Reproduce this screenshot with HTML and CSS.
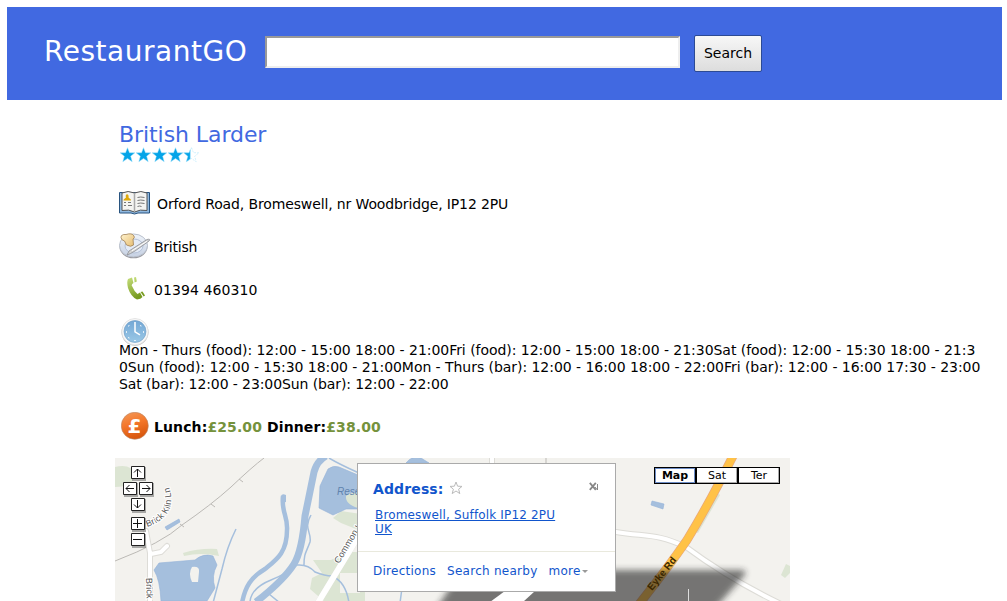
FILE: index.html
```html
<!DOCTYPE html>
<html lang="en">
<head>
<meta charset="utf-8">
<title>RestaurantGO</title>
<link rel="stylesheet" href="styles.css">
</head>
<body>
<header class="header">
  <h1 class="brand">RestaurantGO</h1>
  <input class="query" type="text" aria-label="Search">
  <button class="search">Search</button>
</header>
<main class="details">
  <h2 class="name">British Larder</h2>
  <svg class="stars" width="84" height="16" viewBox="-.5 0 84 16">
    <defs>
      <path id="star" d="M8 .7 10 5.700 15.400 5.800 11.200 9.200 12.700 14.700 8 11.500 3.300 14.700 4.800 9.200 .6 5.800 6 5.700Z"/>
      <path id="halfstar" d="M7.300 2.500 6 5.700 .6 5.800 4.800 9.200 3.300 14.700 7.300 12Z"/>
    </defs>
    <g fill="#04a4e8" stroke="#a5e3fa" stroke-width=".5">
      <use href="#star"/><use href="#star" x="16"/><use href="#star" x="32"/><use href="#star" x="48"/>
      <use href="#star" x="64" fill="#fff" stroke-dasharray="2 1"/>
      <use href="#halfstar" x="63.500"/>
    </g>
  </svg>
  <div class="row address">
    <svg width="31" height="24" viewBox="0 0 31 24">
      <path d="M.5 1.500h30v20.500H19q-3.500 2-7 0H.5z" fill="#8fb8df" stroke="#28537f"/>
      <path d="M3 2Q9-1 15.500 2 22-1 28 2v17.500q-7-1.500-12.500 1.500Q10 18 3 19.500z" fill="#f4f4f1" stroke="#555" stroke-width="1"/>
      <path d="M15.500 2v18" stroke="#aaa" stroke-width="1.500"/>
      <path d="M4.500 9.500c0-2 2-2 2.500-3-1.500-4.500 3.500-4.500 2.500 0 .5 1 2.500 1 2.500 3z" fill="#dfa90b"/>
      <path d="M5 11.500h2m2 0h3M5 14.500h2m2 0h4M18.500 6.500q3-1 7 0m-7 3q3-1 7 0m-7 3q3-1 7 0m-7 3q2-1 4 0" stroke="#777" fill="none"/>
    </svg>
    <span>Orford Road, Bromeswell, nr Woodbridge, IP12 2PU</span>
  </div>
  <div class="row cuisine">
    <svg width="32" height="26" viewBox="0 0 32 26">
      <defs>
        <linearGradient id="plate" x2="0" y2="1"><stop stop-color="#f0f4fa"/><stop offset="1" stop-color="#c6d1e3"/></linearGradient>
        <linearGradient id="bread" x2="1" y2="1"><stop stop-color="#fff3cf"/><stop offset="1" stop-color="#e6bd72"/></linearGradient>
      </defs>
      <ellipse cx="14.500" cy="13.800" rx="14" ry="11.500" fill="#98989e"/>
      <ellipse cx="14.500" cy="12.500" rx="14" ry="11.500" fill="url(#plate)" stroke="#b9c0cc"/>
      <ellipse cx="15" cy="13" rx="9" ry="7" fill="#e4ebf6" stroke="#b4c1d8"/>
      <path d="M2 4.500Q2 1 7 1.500q6-2 8 1.500 1 2-1 3l.500 6q-2.500 2.500-7 0L5.500 8Q2 7 2 4.500z" fill="url(#bread)" stroke="#a08055" stroke-width=".8"/>
      <path d="M8 22 10 18 28 6.500q4-1 2 1.500L16 18q-5 3-8 4z" fill="#d4d4d4" stroke="#8c8e94" stroke-width=".8"/>
      <path d="m13 17.700 15-9.400" stroke="#fff"/>
    </svg>
    <span>British</span>
  </div>
  <div class="row phone">
    <svg width="18" height="23" viewBox="0 0 18 23">
      <defs><linearGradient id="tel" x2=".4" y2="1"><stop stop-color="#c7df7c"/><stop offset="1" stop-color="#779b20"/></linearGradient></defs>
      <path d="M1 2 5 .5 6.500 6Q4 7.500 5 9q2 5 5.500 8l2.500-1.500 2.500 4.500Q14 22 10 22.500 4 20 1 11-.5 5 1 2z" fill="url(#tel)"/>
      <path d="M7 .5 9 0l.8 4.500L7.600 5.500zM13.500 15l2-.5 2.500 4-1.300 1z" fill="url(#tel)"/>
    </svg>
    <span>01394 460310</span>
  </div>
  <div class="hours">
    <svg width="28" height="28" viewBox="0 0 28 28">
      <defs><linearGradient id="face" x2="0" y2="1"><stop stop-color="#73a7d5"/><stop offset="1" stop-color="#9ac8e6"/></linearGradient></defs>
      <circle cx="14" cy="14.200" r="13.500" fill="#bfc0c0"/>
      <circle cx="14" cy="13.700" r="13.200" fill="#f8f8f8" stroke="#dedede" stroke-width=".7"/>
      <circle cx="14" cy="13.500" r="11" fill="url(#face)" stroke="#6f9cc5" stroke-width=".6"/>
      <path d="M14 4v9.800l5 3M5 14h1m16 0h1m-9 8v1M7.500 7.500l.6.600m12-.6-.6.600m-12 12 .6-.6" stroke="#fff" stroke-width="1.500" fill="none"/>
    </svg>
    <div class="times">
      <div class="line one">Mon - Thurs (food): 12:00 - 15:00 18:00 - 21:00Fri (food): 12:00 - 15:00 18:00 - 21:30Sat (food): 12:00 - 15:30 18:00 - 21:3</div>
      <div class="line two">0Sun (food): 12:00 - 15:30 18:00 - 21:00Mon - Thurs (bar): 12:00 - 16:00 18:00 - 22:00Fri (bar): 12:00 - 16:00 17:30 - 23:00</div>
      <div class="line three">Sat (bar): 12:00 - 23:00Sun (bar): 12:00 - 22:00</div>
    </div>
  </div>
  <div class="row price">
    <svg width="28" height="28" viewBox="0 0 28 28">
      <defs><linearGradient id="coin" x2=".3" y2="1"><stop stop-color="#f39a5b"/><stop offset=".5" stop-color="#f4772a"/><stop offset="1" stop-color="#d9580f"/></linearGradient></defs>
      <circle cx="13.800" cy="13.800" r="13.500" fill="url(#coin)" stroke="#bb8667" stroke-width=".6"/>
      <text class="pound" x="13.500" y="21" text-anchor="middle">£</text>
    </svg>
    <span class="meals">Lunch:<span class="amount">£25.00</span> Dinner:<span class="amount">£38.00</span></span>
  </div>
</main>
<section class="map">
  <svg class="tiles" width="675" height="143" viewBox="115 458 675 143">
    <defs><filter id="soft" x="-20%" y="-30%" width="140%" height="160%"><feGaussianBlur stdDeviation="3"/></filter></defs>
    <path d="M115 458h675v143H115z" fill="#f3f2ee"/>
    <g fill="#dce5d3">
      <path d="M115 467q16-4 21 8-4 12-21 12z"/>
      <path d="M183 553q17-5 34-4l2 7q-18-4-35 0z"/>
      <path d="M333 518l8-7 20 3v17l-20-8z"/>
      <path d="M313 560h18l17-8h17v50h-40l-15-13 2-11 10-5z"/>
      <path d="M716 491l4 4-22 38-4-2z"/>
      <path d="M781 575l5-11 4 2v7l-5 5z"/>
    </g>
    <path d="M340 573h20v20h-20z" fill="#f3f2ee"/>
    <g fill="#a5bfdd" stroke="#94b2d8" stroke-width=".6">
      <path d="M154 570l5-7 36-3q8-7 18-4l4 9q-6 11-2 23l-8 13h-46q-1-21-7-31z"/>
      <path d="M320 486l8-17q5-4 11-2l19 8v34l-12 0-13 6-14-7z"/>
      <path d="M165 527l14-8 1 3-13 8z"/>
      <path d="M652 501l12 3-1 5-12-4z"/>
      <path d="M406 463q6-8 15-5l8 5z"/>
    </g>
    <path d="M192 567q8-1 7 5l-1 10h-6q-4-9 0-15z" fill="#f3f2ee"/>
    <path d="M358 493v15q-13-4-12-12 5-4 12-3z" fill="#dce5d3"/>
    <g fill="none" stroke="#a5bfdd">
      <path d="M326 456q-9 5-12 16l-9 44q-3 35-11 48-10 16-38 38" stroke-width="7"/>
      <path d="M283 496c-2 16 5 20 4 34 0 23-11 30-22 39-14 8-20 18-23 34" stroke-width="4.500"/>
      <path d="M311 515c-8 14 1 17-1 27-4 11-6 11-6 23M250 602q1-14 21-22 17-7 26-15 11-1 18 7 10 4 17 4 14 6 17 27M269 594l11 9M236 529q-9 18-14 40l-9 34M329 458q10 6 30 15M400 603l4-30" stroke-width="1.500"/>
    </g>
    <path d="M281 496q1-3 5-1v7l-5 1z" fill="#a5bfdd"/>
    <g fill="none" stroke="#bbb9b5"><path d="M115 561q47-18 67-36 29-20 49-38 21-20 33-29"/><path d="M180 524l4 3m27-23 4 3m24-28 4 3M546 458v5"/></g>
    <g fill="none" stroke="#dddcd7" stroke-width="6" stroke-linecap="round">
      <path d="M146 531l4 22 0 51M151 554l10-2 6-6"/><path d="M361 532l-45 74"/>
      <path d="M616 532c30 5 40 1 70 15 31 23 68 44 95 57M492 458v5"/>
    </g>
    <g fill="none" stroke="#fff" stroke-width="4" stroke-linecap="round">
      <path d="M146 531l4 22 0 51M151 554l10-2 6-6"/><path d="M361 532l-45 74" stroke-width="6"/>
      <path d="M616 532c30 5 40 1 70 15 31 23 68 44 95 57M492 458v5"/>
    </g>
    <path d="M734 454q-25 50-47 86-20 29-51 68" fill="none" stroke="#e9a87b" stroke-width="9"/>
    <path d="M734 454q-25 50-47 86-20 29-51 68" fill="none" stroke="#ffc247" stroke-width="7.500"/>
    <path d="M462 570H742q7 1 0 8l-31 35H433z" fill="#222" opacity=".6" filter="url(#soft)"/>
    <path d="M505 591l-15 11h33l12-11z" fill="#fff"/>
    <path d="M688.500 589v12" stroke="#ddd"/>
    <g class="road">
      <path id="kiln" d="M147 527Q165 521 170 508 173 496 168 484" fill="none"/>
      <text><textPath href="#kiln">Brick Kiln Ln</textPath></text>
      <text transform="translate(146 578)rotate(88)">Brick K</text>
      <text transform="translate(339 564)rotate(-59)">Common L</text>
      <text class="eyke" transform="translate(652 591)rotate(-51)">Eyke Rd</text>
      <text class="water" x="337" y="495">Rese</text>
    </g>
    <g fill="#777" opacity=".6"><path d="M132 467h14v14h-14zM124 483h14v14h-14zM140 483h14v14h-14zM132 499h14v14h-14zM132 518h14v14h-14zM132 534h14v14h-14z"/></g>
    <g fill="#fff" stroke="#222"><path d="M131.500 466.500h13v12h-13zM123.500 482.500h13v12h-13zM139.500 482.500h13v12h-13zM131.500 498.500h13v12h-13zM131.500 517.500h13v12h-13zM131.500 533.500h13v12h-13z"/></g>
    <path d="M137.500 477v-8m-3.500 3.500 3.500-3.500 3.500 3.500M134 488.500h-8m3.500-3.500-3.500 3.500 3.500 3.500M142 488.500h8m-3.500-3.500 3.500 3.500-3.500 3.500M137.500 500v8m-3.500-3.500 3.500 3.500 3.500-3.500M133 523.500h9m-4.500-4.500v9M133 539.500h9" fill="none" stroke="#111"/>
  </svg>
  <div class="types"><span class="type active">Map</span><span class="type">Sat</span><span class="type">Ter</span></div>
  <div class="bubble">
    <div class="top">
      <div class="title"><b>Address:</b>
        <svg class="favourite" width="14" height="14" viewBox="0 0 14 14"><path d="M7 1 8.600 5.200 13 5.400 9.600 8.200 10.800 12.600 7 10 3.200 12.600 4.400 8.200 1 5.400 5.400 5.200Z" fill="none" stroke="#bbb"/></svg>
        <svg class="close" width="9" height="9" viewBox="0 0 9 9"><path d="m.8.800 6 7m0-7-6 7" stroke="#888" stroke-width="1.800"/><path d="m8.500 2v6M6 5l2.500 3" stroke="#888"/></svg>
      </div>
      <a class="place">Bromeswell, Suffolk IP12 2PU<br>UK</a>
    </div>
    <div class="links"><span>Directions</span><span>Search nearby</span><span>more<i class="caret"></i></span></div>
  </div>
</section>
</body>
</html>
```
FILE: styles.css
```css
* { box-sizing: border-box; }
html, body { height: 601px; overflow: hidden; }
body { margin: 0; padding: 7px 5px 0 7px; background: #fff; color: #000; font: 14px/17px "DejaVu Sans", Verdana, sans-serif; }
.header { height: 93px; background: #4169e1; display: flex; align-items: flex-start; padding-left: 37px; }
.brand { margin: 27px 0 0; width: 221px; font-size: 28px; line-height: 35px; font-weight: 400; letter-spacing: .53px; color: #fff; white-space: nowrap; }
.query { width: 415px; height: 32px; margin-top: 29px; border: 2px solid; border-color: #999 #eee #eee #999; background: #fff; padding: 0 4px; }
.search { margin: 28px 0 0 14px; width: 68px; height: 37px; padding: 0; border: 1px solid #2c4a94; border-radius: 2px; background: linear-gradient(#f7f7f7, #ddd); font: inherit; color: #000; }
.details { padding: 22px 0 0 112px; height: 358px; white-space: nowrap; }
.name { margin: 0; font-size: 22px; line-height: 26px; height: 25px; font-weight: 400; letter-spacing: -.07px; color: #4169e1; }
.stars { display: block; }
.row { display: flex; align-items: center; }
.address { margin-top: 28px; height: 24px; gap: 7px; letter-spacing: -.13px; }
.address span { position: relative; top: 1px; }
.cuisine { margin-top: 18px; height: 26px; gap: 3px; }
.cuisine span, .phone span { position: relative; top: 1px; }
.cuisine span { left: -1px; letter-spacing: -.25px; padding-left: 1px; }
.phone { margin-top: 18px; height: 23px; padding-left: 8px; gap: 9px; letter-spacing: .08px; }
.phone span { top: 2px; }
.hours { margin-top: 18px; }
.hours svg { display: block; margin-left: 2px; }
.times { margin-top: -4px; position: relative; }
.line { height: 17px; }
.one { letter-spacing: -.04px; }
.two { letter-spacing: -.048px; }
.three { letter-spacing: -.1px; }
.price { margin-top: 19px; height: 28px; padding-left: 2px; gap: 5px; }
.meals { font-weight: 700; letter-spacing: .11px; position: relative; top: 1px; }
.amount { color: #75923c; }
.pound { font: bold 20px "DejaVu Sans", sans-serif; fill: #fff; }
.map { position: relative; width: 675px; height: 143px; margin-left: 108px; overflow: hidden; }
.tiles { display: block; }
.road { font: 9px "Liberation Sans", Arial, sans-serif; fill: #555; stroke: #fff; stroke-width: 2px; paint-order: stroke; letter-spacing: .15px; }
.road #kiln { stroke: none; }
.road .eyke { fill: #3a2600; stroke: none; font-size: 10px; font-weight: 700; letter-spacing: 0; }
.road .water { fill: #5f83ad; stroke: none; font-size: 10px; font-style: italic; letter-spacing: 0; }
.types { position: absolute; left: 539px; top: 9px; display: flex; }
.type { width: 42px; height: 17px; border: 1px solid #000; background: #fff; box-shadow: inset -1px -1px #aaa; font-size: 11px; line-height: 15px; text-align: center; }
.type.active { font-weight: 700; box-shadow: inset 0 0 0 1px #6d8dc5; }
.bubble { position: absolute; left: 242px; top: 5px; width: 259px; height: 129px; border: 1px solid #aaa; background: #fff; color: #1155cc; }
.top { height: 88px; padding: 16px 15px 0; border-bottom: 1px solid #e9e9dd; }
.title { display: flex; gap: 5px; font-size: 14px; line-height: 18px; letter-spacing: .12px; }
.favourite { margin-top: 1px; }
.close { margin: 2px 2px 0 auto; }
.place { display: block; margin: 10px 0 0 2px; font-size: 12px; line-height: 14px; letter-spacing: .16px; text-decoration: underline; }
.links { display: flex; gap: 11px; padding: 11px 15px; font-size: 12px; line-height: 16px; letter-spacing: .26px; white-space: nowrap; }
.caret { display: inline-block; margin: 0 0 2px 1px; border: 3px solid transparent; border-top-color: #999; border-bottom: 0; }
```
